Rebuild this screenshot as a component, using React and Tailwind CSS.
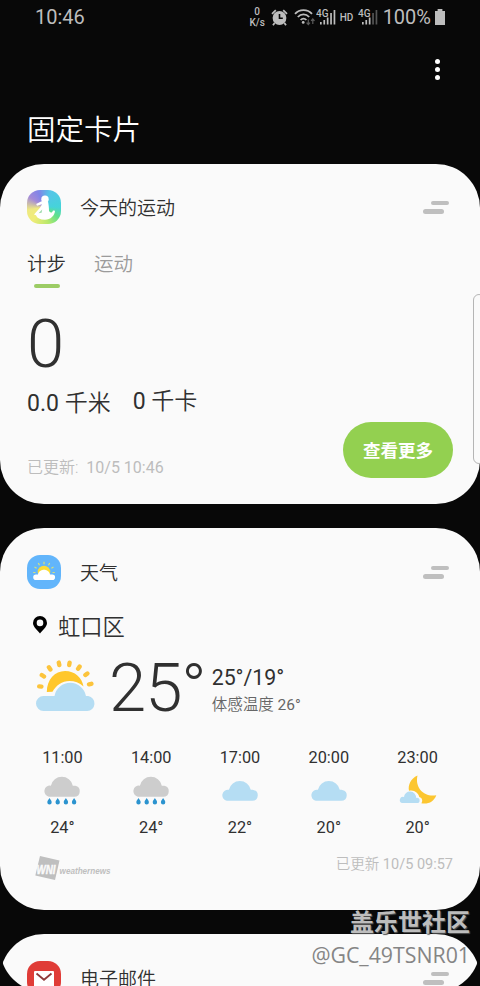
const FORECAST = [
  { time: '11:00', icon: 'rain',  temp: '24°' },
  { time: '14:00', icon: 'rain',  temp: '24°' },
  { time: '17:00', icon: 'cloud', temp: '22°' },
  { time: '20:00', icon: 'cloud', temp: '20°' },
  { time: '23:00', icon: 'night', temp: '20°' },
]

const CLOUD = 'M5.5 11 H31 a5.5 5.5 0 0 0 1 -10.9 C30.5 -0.2 29.8 0 29.5 0 A11.2 11.2 0 0 0 7.6 0 A5.6 5.6 0 0 0 5.5 11 Z'

/* ── Icons ── */

function AlarmIcon() {
  return (
    <svg width="17" height="17" viewBox="0 0 17 17" fill="none">
      <circle cx="8.5" cy="9" r="6.9" fill="#bdbdbd" />
      <path d="M1 4.8 L4.8 1.2 M16 4.8 L12.2 1.2 M3.6 14 L2 16.3 M13.4 14 L15 16.3" stroke="#bdbdbd" strokeWidth="1.8" />
      <path d="M8.5 5 V9.3 H11.8" stroke="#080808" strokeWidth="1.6" />
    </svg>
  )
}

function WifiIcon() {
  return (
    <svg width="22" height="18" viewBox="0 0 22 18" fill="none">
      <path d="M1 5.8 C5.5 0.8 13.5 0.8 18 5.8 M3.8 9 C7 5.6 12 5.6 15.2 9 M6.6 12 C8.3 10.2 10.7 10.2 12.4 12" stroke="#bdbdbd" strokeWidth="1.8" />
      <circle cx="9.2" cy="14.4" r="1.4" fill="#bdbdbd" />
      <path d="M14.3 11.5 V16 M12.6 14.6 L14.3 16.5 L16 14.6 M18.8 16 V11.5 M17.1 12.9 L18.8 11 L20.5 12.9" stroke="#5c5c5c" strokeWidth="1.2" />
    </svg>
  )
}

function SignalIcon({ bars }) {
  return (
    <svg width="20" height="18" viewBox="0 0 20 18">
      <text x="0" y="8.6" fontFamily="Roboto, sans-serif" fontSize="10" fontWeight="500" textLength="12.5" lengthAdjust="spacingAndGlyphs" fill="#bdbdbd">4G</text>
      {[14, 12, 9.5, 5, 2].map((y, i) => (
        <rect key={y} x={4 + i * 3.4} y={y} width="1.7" height={16.5 - y} fill={i < bars ? '#bdbdbd' : '#555555'} />
      ))}
    </svg>
  )
}

function BatteryIcon() {
  return (
    <svg width="10" height="16" viewBox="0 0 10 16" fill="#bdbdbd">
      <path d="M2.6 0 H7.4 V2 H10 V16 H0 V2 H2.6 Z" />
    </svg>
  )
}

function HealthIcon() {
  return (
    <div className="size-[34px] rounded-[13px] overflow-hidden bg-[conic-gradient(from_20deg,#55c5e8,#45d3da_70deg,#5ee08c_105deg,#b8e86a_145deg,#f0ec78_200deg,#eee982_240deg,#a48bd8_285deg,#8084e8_320deg,#55c5e8)]">
      <svg width="34" height="34" viewBox="0 0 34 34" fill="#fff">
        <circle cx="18" cy="9.2" r="3.7" />
        <path d="M14.5 11.2 L21 11.5 C21.6 14.5 22 17.5 22 21 C23.8 23.4 25.4 22.6 26 20.4 L28 20.8 C27.8 25.5 23.5 29.8 18 29.8 C13 29.8 10 28.2 9 25.3 L7 24.6 L13 17.8 L15 14.3 L10 15.8 L9.2 14 Z" />
        <path d="M11.5 23.2 L15.2 19.4 L14.6 22.8 Z" fill="#9fdcae" />
      </svg>
    </div>
  )
}

function WeatherAppIcon() {
  return (
    <div className="size-[34px] rounded-[13px] bg-[#62b5fb]">
      <svg width="34" height="34" viewBox="0 0 34 34">
        <path d="M17 9.2 V6.8 M12.5 10.2 L11.3 8 M21.5 10.2 L22.7 8 M9.6 13.2 L7.5 12 M24.4 13.2 L26.5 12 M8.5 17.5 H6.2 M25.5 17.5 H27.8" stroke="#d7e27a" strokeWidth="1.2" />
        <circle cx="17" cy="17" r="6.3" fill="#fbdc36" />
        <path d="M9 25 H25.3 a2.8 2.8 0 0 0 0 -5.6 H23 C22 15.6 19 14.8 17 14.8 C15 14.8 12 15.6 11 19.4 H9 a2.8 2.8 0 0 0 0 5.6 Z" fill="#fff" />
      </svg>
    </div>
  )
}

function MailIcon() {
  return (
    <div className="size-[34px] rounded-[13px] bg-[#e03c37]">
      <svg width="34" height="34" viewBox="0 0 34 34" fill="none">
        <rect x="7" y="10" width="20" height="16" rx="1" fill="#fff" />
        <path d="M9.5 12.5 L17 18.8 L24.5 12.5" stroke="#8f3a3a" strokeWidth="1.8" />
      </svg>
    </div>
  )
}

function PinIcon() {
  return (
    <svg width="14" height="18" viewBox="0 0 14 18">
      <path fillRule="evenodd" d="M7 0 A7 7 0 0 1 14 7 C14 10.8 9.5 14.5 7 17.4 C4.5 14.5 0 10.8 0 7 A7 7 0 0 1 7 0 Z M7 3.6 A3.3 3.3 0 1 0 7 10.2 A3.3 3.3 0 1 0 7 3.6 Z" />
    </svg>
  )
}

function PartlySunnyIcon() {
  return (
    <svg width="60" height="52" viewBox="0 0 60 52" fill="none">
      <path d="M3.2 26.4 L5.4 26.6 M5.8 15 L8 16.5 M12.9 7.2 L14.4 9.4 M22.8 2.6 L23.3 5 M33.6 2.6 L33.2 5 M43.6 6.6 L42.1 8.7 M51.4 13.5 L49.4 15 M55.4 23.8 L53 24.3" stroke="#fcc43c" strokeWidth="4.4" strokeLinecap="round" />
      <path d="M10.8 32 C10.8 19.5 19 11 29 11 C39 11 46 17.6 47.5 26.5 C43.5 22.8 38.5 21 33.5 21 C26 21 20 25.5 16.5 31.8 Z" fill="#ffc72c" />
      <path d="M7.5 51 H51.2 a7.5 7.5 0 0 0 1 -14.9 H50 A16 16 0 0 0 18.5 36 H7.5 a7.5 7.5 0 0 0 0 15 Z" fill="#b5ddf3" />
    </svg>
  )
}

function ForecastIcon({ type }) {
  if (type === 'night') {
    return (
      <svg width="38" height="32" viewBox="0 0 38 32">
        <path d="M18.5 0.5 C11.5 3.5 8.8 10.5 10 15.8 C15 14.5 19.5 18 20.3 22 C23.5 23 24 26 22.3 28.3 C29.5 29.5 35 26.5 37.3 20.2 C26 22.5 15.5 13.5 18.5 0.5 Z" fill="#fcc630" />
        <path d="M3 28 H18 a2.6 2.6 0 0 0 0 -5.2 H17 A6 6 0 0 0 5 22 A3 3 0 0 0 3 28 Z" fill="#b5ddf3" />
      </svg>
    )
  }
  return (
    <svg width="38" height="32" viewBox="0 0 38 32">
      <path d={CLOUD} transform={type === 'rain' ? 'translate(0.3 10.7)' : 'translate(0.3 14.8)'} fill={type === 'rain' ? '#cdcdcd' : '#b5ddf3'} />
      {type === 'rain' && [6.5, 14.7, 22.9, 31.1].map(x => (
        <path key={x} d={`M${x} 23 c0.6 1.6 2.2 2.3 2.2 4.2 a2.2 2.2 0 0 1 -4.4 0 c0 -1.9 1.6 -2.6 2.2 -4.2 Z`} fill="#2b93cf" />
      ))}
    </svg>
  )
}

function WeathernewsLogo() {
  return (
    <svg width="90" height="26" viewBox="0 0 90 26">
      <path d="M5 1 L24.5 5.4 L20 25 L0.3 20.4 Z" fill="#bfbfbf" />
      <text x="1.5" y="18.6" fontFamily="Liberation Sans, sans-serif" fontSize="13" fontWeight="700" fontStyle="italic" stroke="#fafafa" strokeWidth="0.5" textLength="19" lengthAdjust="spacingAndGlyphs" fill="#fafafa">WNI</text>
      <text x="24.6" y="18.8" fontFamily="Liberation Sans, sans-serif" fontSize="9.8" fontWeight="700" fontStyle="italic" textLength="51" lengthAdjust="spacingAndGlyphs" fill="#bfbfbf">weathernews</text>
    </svg>
  )
}

/* ── Card parts ── */

function CardHeader({ icon, title }) {
  return (
    <div className="flex items-center h-[34px]">
      {icon}
      <h2 className="ml-[19px] mt-[4px] text-[19px] leading-[34px] font-[350] text-[#303030]">{title}</h2>
      {/* drag handle */}
      <div className="ml-auto mr-1 w-[26px] flex flex-col gap-[4px]">
        <span className="self-end w-[18px] h-[4px] rounded-full bg-[#bfbfbf]" />
        <span className="w-[21px] h-[5px] rounded-full bg-[#bfbfbf]" />
      </div>
    </div>
  )
}

function StatusBar() {
  return (
    <div className="h-[34px] pl-[35px] pr-[35px] flex items-center justify-between text-[#bdbdbd]">
      <span className="text-[20px] leading-[34px]">10:46</span>
      <div className="flex items-center">
        <div className="w-[17px] mr-[5px] flex flex-col gap-px text-center text-[10px] leading-[10px] font-medium">
          <div>0</div>
          <div>K/s</div>
        </div>
        <AlarmIcon />
        <div className="ml-[6px]"><WifiIcon /></div>
        <div><SignalIcon bars={5} /></div>
        <span className="ml-1 w-[14px] text-[10px] font-medium">HD</span>
        <div className="ml-1"><SignalIcon bars={3} /></div>
        <span className="ml-[5px] text-[20px] leading-[34px]">100%</span>
        <div className="ml-1"><BatteryIcon /></div>
      </div>
    </div>
  )
}

export default function App() {
  return (
    <div className="relative w-[480px] h-[986px] overflow-hidden bg-[#080808] font-['Roboto','Noto_Sans_CJK_SC',sans-serif] text-[#303030]">
      <StatusBar />

      <div className="h-[70px] flex justify-end items-center pr-[40px]">
        <div className="flex flex-col gap-[3px]">
          <span className="size-[5px] rounded-full bg-white" />
          <span className="size-[5px] rounded-full bg-white" />
          <span className="size-[5px] rounded-full bg-white" />
        </div>
      </div>

      <h1 className="h-[60px] pl-[27px] pt-[6px] text-[28.5px] leading-[42px] font-[350] text-white">固定卡片</h1>

      <main className="flex flex-col gap-6">

        {/* Today's activity */}
        <section className="relative h-[340px] rounded-[44px] bg-[#fafafa] px-[27px] pt-[26px]">
          <CardHeader icon={<HealthIcon />} title="今天的运动" />

          <div className="mt-[25px] flex gap-[28px] text-[19.5px] leading-8 font-[350]">
            <div>
              <div>计步</div>
              <div className="mx-auto mt-[3px] w-[26px] h-[4px] rounded-sm bg-[#9ccc65]" />
            </div>
            <div className="text-[#9b9b9b]">运动</div>
          </div>

          <div className="mt-[17px] text-[67px] leading-[78px] font-light">0</div>

          <div className="flex text-[23px] leading-8">
            <span className="mt-[5px]">0.0 <span className="font-[350]">千米</span></span>
            <span className="ml-[22px] mt-[3px]">0 <span className="font-[350]">千卡</span></span>
          </div>

          <div className="mt-[2px] flex justify-between items-end">
            <span className="mb-[-2px] text-[16px] leading-6 text-[#bdbdbd]"><span className="font-[350]">已更新:</span>&nbsp; 10/5 10:46</span>
            <button className="w-[110px] h-[56px] pt-[3px] rounded-full bg-[#93d050] text-white text-[17.5px] font-bold">查看更多</button>
          </div>

          {/* edge panel handle */}
          <div className="absolute left-[473px] top-[130px] w-3 h-[170px] rounded-[8px] border border-[#b5b5b5] bg-[#fafafa]" />
        </section>

        {/* Weather */}
        <section className="h-[382px] rounded-[44px] bg-[#fafafa] px-[27px] pt-[27px]">
          <CardHeader icon={<WeatherAppIcon />} title="天气" />

          <div className="mt-[20px] pl-[6px] flex items-center text-[22.3px] leading-8">
            <PinIcon />
            <span className="ml-[11px] mt-[2px] -mb-[2px] font-[350]">虹口区</span>
          </div>

          <div className="mt-[16px] pl-[9px] h-[68px] flex">
            <div className="mt-[3px]"><PartlySunnyIcon /></div>
            <div className="ml-[13px] mt-px text-[67px] leading-[60px] font-light tracking-[-1px]">25°</div>
            <div className="ml-[6px] mt-[7px]">
              <div className="text-[21.3px] leading-7">25°/19°</div>
              <div className="mt-px text-[15.5px] leading-6 text-[#666666]"><span className="font-[350]">体感温度</span> 26°</div>
            </div>
          </div>

          <div className="mt-[21px] -ml-[9px] w-[444px] grid grid-cols-5 text-center text-[16.3px] leading-6">
            {FORECAST.map(f => (
              <div key={f.time} className="flex flex-col items-center">
                <div>{f.time}</div>
                <div className="mt-[5px]"><ForecastIcon type={f.icon} /></div>
                <div className="mt-[9px]">{f.temp}</div>
              </div>
            ))}
          </div>

          <div className="mt-[13px] pl-2 flex justify-between">
            <div className="mt-[2px]"><WeathernewsLogo /></div>
            <span className="text-[14.5px] leading-6 text-[#bdbdbd]"><span className="font-[350]">已更新</span> 10/5 09:57</span>
          </div>
        </section>

        {/* Email, cut by the rounded bottom corners of the display */}
        <div className="h-[58px] shrink-0 rounded-b-[44px] overflow-hidden">
          <section className="h-[200px] rounded-t-[44px] bg-[#fafafa] px-[27px] pt-[27px]">
            <CardHeader icon={<MailIcon />} title="电子邮件" />
          </section>
        </div>
      </main>

      {/* watermark */}
      <div className="absolute right-[10px] top-[907px] text-right">
        <div className="text-[24px] leading-8 font-bold text-[#bdbdbd] [text-shadow:1px_1px_1px_#555]">盖乐世社区</div>
        <div className="text-[21.3px] leading-8 text-[#858585] font-['Open_Sans',sans-serif]">@GC_49TSNR01</div>
      </div>
    </div>
  )
}
